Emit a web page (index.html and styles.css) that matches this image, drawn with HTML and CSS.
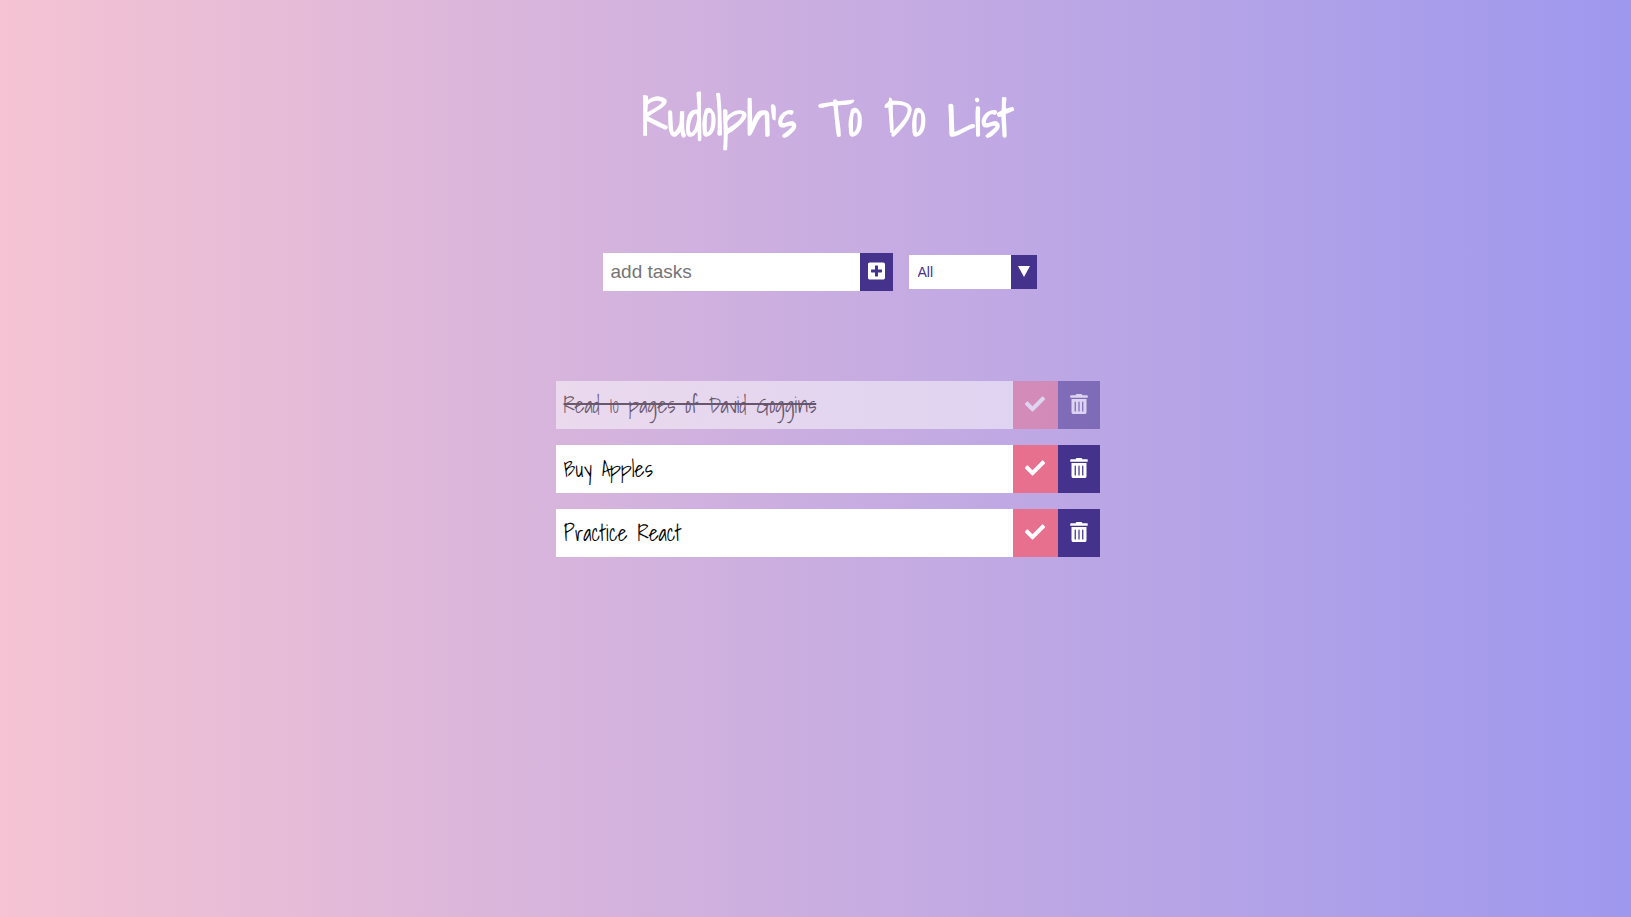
FILE: index.html
```html
<!DOCTYPE html>
<html lang="en">
<head>
<meta charset="utf-8">
<meta name="viewport" content="width=device-width, initial-scale=1">
<title>Rudolph's To Do List</title>
<link rel="stylesheet" href="styles.css">
</head>
<body>
<svg class="sprite" aria-hidden="true">
  <symbol id="plus" viewBox="0 0 448 512"><path d="M400 32H48C21.500 32 0 53.500 0 80v352c0 26.500 21.500 48 48 48h352c26.500 0 48-21.500 48-48V80c0-26.500-21.500-48-48-48zm-32 252c0 6.600-5.400 12-12 12h-92v92c0 6.600-5.400 12-12 12h-56c-6.600 0-12-5.400-12-12v-92H92c-6.600 0-12-5.400-12-12v-56c0-6.600 5.400-12 12-12h92v-92c0-6.600 5.400-12 12-12h56c6.600 0 12 5.400 12 12v92h92c6.600 0 12 5.400 12 12v56z"/></symbol>
  <symbol id="check" viewBox="0 0 512 512"><path d="M173.900 439.400l-166.400-166.400c-10-10-10-26.200 0-36.200l36.200-36.200c10-10 26.200-10 36.200 0L192 312.700 432.100 72.600c10-10 26.200-10 36.200 0l36.200 36.200c10 10 10 26.200 0 36.200L210.100 439.400c-10 10-26.200 10-36.200 0z"/></symbol>
  <symbol id="trash" viewBox="0 0 448 512"><path d="M32 464a48 48 0 0 0 48 48h288a48 48 0 0 0 48-48V128H32zm272-256a16 16 0 0 1 32 0v224a16 16 0 0 1-32 0zm-96 0a16 16 0 0 1 32 0v224a16 16 0 0 1-32 0zm-96 0a16 16 0 0 1 32 0v224a16 16 0 0 1-32 0zM432 32H312l-9.400-18.700A24 24 0 0 0 281.100 0H166.800a23.700 23.700 0 0 0-21.400 13.300L136 32H16A16 16 0 0 0 0 48v32a16 16 0 0 0 16 16h416a16 16 0 0 0 16-16V48a16 16 0 0 0-16-16z"/></symbol>
</svg>
<div class="app">
  <header class="header"><h1 class="title">Rudolph's To Do List</h1></header>
  <form class="controls">
    <div class="add">
      <input class="add-input" type="text" placeholder="add tasks" aria-label="New task">
      <button class="add-button" type="submit" aria-label="Add task"><svg class="icon icon-plus"><use href="#plus"/></svg></button>
    </div>
    <div class="filter">
      <select class="filter-select" aria-label="Filter tasks">
        <option>All</option>
        <option>Completed</option>
        <option>Uncompleted</option>
      </select>
      <span class="filter-arrow" aria-hidden="true"><svg class="arrow" viewBox="0 0 12 11"><path d="M0 0h12L6 11z"/></svg></span>
    </div>
  </form>
  <ul class="tasks">
    <li class="task task-done">
      <span class="task-text">Read 10 pages of David Goggins</span>
      <button class="task-check" type="button" aria-label="Complete"><svg class="icon icon-check"><use href="#check"/></svg></button>
      <button class="task-delete" type="button" aria-label="Delete"><svg class="icon icon-trash"><use href="#trash"/></svg></button>
    </li>
    <li class="task">
      <span class="task-text">Buy Apples</span>
      <button class="task-check" type="button" aria-label="Complete"><svg class="icon icon-check"><use href="#check"/></svg></button>
      <button class="task-delete" type="button" aria-label="Delete"><svg class="icon icon-trash"><use href="#trash"/></svg></button>
    </li>
    <li class="task">
      <span class="task-text">Practice React</span>
      <button class="task-check" type="button" aria-label="Complete"><svg class="icon icon-check"><use href="#check"/></svg></button>
      <button class="task-delete" type="button" aria-label="Delete"><svg class="icon icon-trash"><use href="#trash"/></svg></button>
    </li>
  </ul>
</div>
</body>
</html>
```
FILE: styles.css
```css
* {
  box-sizing: border-box;
}

body {
  margin: 0;
  min-height: 100vh;
  background: linear-gradient(to right, #f5c3d3, #9e98ee);
  font-family: "Shadows Into Light", "Shadows Into Light Two", "Liberation Sans Narrow", "Liberation Sans", sans-serif;
}

.sprite {
  display: none;
}

.app {
  display: flex;
  flex-direction: column;
  align-items: center;
  padding: 86px 0 32px 24px;
}

.title {
  margin: 0;
  color: #fff;
  font-size: 50px;
  line-height: 64px;
  font-weight: 700;
  text-align: center;
}

.controls {
  display: flex;
  align-items: center;
  gap: 16px;
  margin: 103px 16px 0 0;
}

.add,
.filter {
  display: flex;
}

.add-input {
  width: 257px;
  height: 38px;
  padding: 0 8px;
  border: 0;
  border-radius: 0;
  background: #fff;
  font-family: "Liberation Sans", Arial, sans-serif;
  font-size: 19px;
}

.add-input::placeholder {
  color: #757575;
}

.add-button,
.task-check,
.task-delete {
  display: flex;
  align-items: center;
  justify-content: center;
  padding: 0 0 2px;
  border: 0;
  color: #fff;
  cursor: pointer;
}

.add-button {
  width: 33px;
  background: #44328d;
}

.filter-select {
  width: 102px;
  height: 34px;
  padding: 0 9px;
  border: 0;
  border-radius: 0;
  appearance: none;
  background: #fff;
  color: #44328d;
  font-family: "Liberation Sans", Arial, sans-serif;
  font-size: 14px;
}

.filter-arrow {
  display: flex;
  align-items: center;
  justify-content: center;
  width: 26px;
  padding-bottom: 1px;
  background: #44328d;
  color: #fff;
}

.arrow {
  width: 12px;
  height: 11px;
  fill: currentColor;
}

.icon {
  fill: currentColor;
}

.icon-plus {
  width: 17px;
  height: 20px;
}

.icon-check {
  width: 20px;
  height: 20px;
}

.icon-trash {
  width: 18px;
  height: 20px;
}

.tasks {
  display: flex;
  flex-direction: column;
  gap: 16px;
  width: 544px;
  max-width: 100%;
  margin: 90px 0 0;
  padding: 0;
  list-style: none;
}

.task {
  display: flex;
  height: 48px;
  background: #fff;
}

.task-done {
  opacity: 0.5;
}

.task-text {
  flex: 1;
  padding: 0 8px;
  color: #000;
  font-size: 22px;
  line-height: 48px;
}

.task-done .task-text {
  text-decoration: line-through;
  text-decoration-thickness: 2px;
}

.task-check {
  width: 45px;
  background: #e8708f;
}

.task-delete {
  width: 42px;
  background: #44328d;
}
```
